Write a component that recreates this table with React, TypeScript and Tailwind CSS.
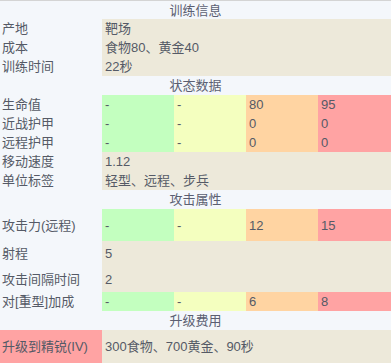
import React from "react"

type Tone = "green" | "yellow" | "orange" | "red"

const toneClass: Record<Tone, string> = {
  green: "bg-[#c3ffbf]",
  yellow: "bg-[#f4ffbf]",
  orange: "bg-[#ffd4a2]",
  red: "bg-[#ffa3a3]",
}

function SectionHeader({ title }: { title: string }) {
  return (
    <div className="col-span-5 flex h-[19px] items-center justify-center bg-[#f4f7fb] text-[#5b5f72]">
      {title}
    </div>
  )
}

function Label({ text, h = "h-[19px]", red }: { text: string; h?: string; red?: boolean }) {
  return (
    <div className={`flex ${h} items-center pl-[2px] ${red ? "bg-[#ffa3a3]" : "bg-[#f4f7fb]"}`}>
      {text}
    </div>
  )
}

function PlainRow({ label, value, h = "h-[19px]", red }: { label: string; value: string; h?: string; red?: boolean }) {
  return (
    <>
      <Label text={label} h={h} red={red} />
      <div className={`col-span-4 flex ${h} items-center bg-[#ede9da] pl-[3px]`}>{value}</div>
    </>
  )
}

function TierRow({ label, values, h = "h-[19px]" }: { label: string; values: string[]; h?: string }) {
  const tones: Tone[] = ["green", "yellow", "orange", "red"]
  return (
    <>
      <Label text={label} h={h} />
      {values.map((v, i) => (
        <div key={i} className={`flex ${h} items-center pl-[3px] ${toneClass[tones[i]]}`}>
          {v}
        </div>
      ))}
    </>
  )
}

export default function App() {
  return (
    <div className="h-[363px] w-[391px] overflow-hidden bg-[#f4f7fb] font-['Liberation_Sans','Noto_Sans_CJK_SC',sans-serif] text-[13px] leading-none text-[#555a66]">
      <div className="h-px bg-[#d4d4d4]" />
      <div className="grid grid-cols-[102px_72px_72px_72px_73px]">
        <div className="col-span-5 flex h-[18px] items-center justify-center bg-[#f4f7fb] text-[#5b5f72]">
          训练信息
        </div>
        <PlainRow label="产地" value="靶场" />
        <PlainRow label="成本" value="食物80、黄金40" />
        <PlainRow label="训练时间" value="22秒" />

        <SectionHeader title="状态数据" />
        <TierRow label="生命值" values={["-", "-", "80", "95"]} />
        <TierRow label="近战护甲" values={["-", "-", "0", "0"]} />
        <TierRow label="远程护甲" values={["-", "-", "0", "0"]} />
        <PlainRow label="移动速度" value="1.12" />
        <PlainRow label="单位标签" value="轻型、远程、步兵" />

        <SectionHeader title="攻击属性" />
        <TierRow label="攻击力(远程)" values={["-", "-", "12", "15"]} h="h-[32px]" />
        <PlainRow label="射程" value="5" h="h-[25px]" />
        <PlainRow label="攻击间隔时间" value="2" h="h-[26px]" />
        <TierRow label="对[重型]加成" values={["-", "-", "6", "8"]} />

        <SectionHeader title="升级费用" />
        <PlainRow label="升级到精锐(IV)" value="300食物、700黄金、90秒" h="h-[33px]" red />
      </div>
    </div>
  )
}
